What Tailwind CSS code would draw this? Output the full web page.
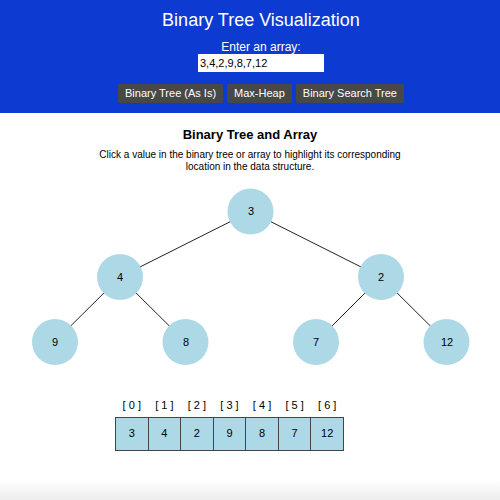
<!DOCTYPE html>
<html lang="en">
<head>
<meta charset="utf-8">
<meta name="viewport" content="width=device-width, initial-scale=1">
<title>Binary Tree Visualization</title>
<script src="https://cdn.jsdelivr.net/npm/@tailwindcss/browser@4"></script>
</head>
<body class="flex min-h-screen flex-col bg-white font-['Liberation_Sans',Arial,sans-serif] text-black">
<header class="flex flex-col items-center bg-[#0d3bd1] pt-2 pr-0 pb-[10px] pl-[22px] text-white">
  <h1 class="text-lg leading-6">Binary Tree Visualization</h1>
  <label for="values" class="mt-2 text-xs leading-[14px]">Enter an array:</label>
  <input id="values" type="text" value="3,4,2,9,8,7,12" class="h-[18px] w-[126px] bg-white px-[2px] text-[11px] text-black">
  <div class="mt-3 flex gap-1 text-[11px]">
    <button type="button" class="h-[19px] rounded-xs bg-[#484848] px-[7px]">Binary Tree (As Is)</button>
    <button type="button" class="h-[19px] rounded-xs bg-[#484848] px-[7px]">Max-Heap</button>
    <button type="button" class="h-[19px] rounded-xs bg-[#484848] px-[7px]">Binary Search Tree</button>
  </div>
</header>
<main class="flex grow flex-col pt-[14px]">
  <h2 class="text-center text-[13px] leading-4 font-bold">Binary Tree and Array</h2>
  <p class="mx-auto mt-[6px] max-w-[320px] text-center text-[10px] leading-3">Click a value in the binary tree or array to highlight its corresponding location in the data structure.</p>
  <svg viewBox="0 0 500 196" class="mt-[6px] w-full" role="img" aria-label="Binary tree" font-size="11" text-anchor="middle">
    <g stroke="#222" stroke-width="1">
      <path d="M250.500 32.500 120 98M250.500 32.500 381 98M120 98 54.500 163M120 98 185.500 163M381 98 316 163M381 98 446.500 163"/>
    </g>
    <g fill="#add8e6">
      <circle cx="250.500" cy="32.500" r="23"/>
      <circle cx="120" cy="98" r="23"/>
      <circle cx="381" cy="98" r="23"/>
      <circle cx="55" cy="163" r="23"/>
      <circle cx="185.500" cy="163" r="23"/>
      <circle cx="316" cy="163" r="23"/>
      <circle cx="446.500" cy="163" r="23"/>
    </g>
    <text x="251" y="36">3</text>
    <text x="120" y="102">4</text>
    <text x="381" y="102">2</text>
    <text x="55" y="167">9</text>
    <text x="186" y="167">8</text>
    <text x="316" y="167">7</text>
    <text x="447" y="167">12</text>
  </svg>
  <table class="mt-6 ml-[23%] w-[229px] table-fixed border-collapse text-center text-[11px]" aria-label="Array">
    <thead>
      <tr class="h-[18px] align-top leading-3">
        <th scope="col" class="font-normal">[ 0 ]</th>
        <th scope="col" class="font-normal">[ 1 ]</th>
        <th scope="col" class="font-normal">[ 2 ]</th>
        <th scope="col" class="font-normal">[ 3 ]</th>
        <th scope="col" class="font-normal">[ 4 ]</th>
        <th scope="col" class="font-normal">[ 5 ]</th>
        <th scope="col" class="font-normal">[ 6 ]</th>
      </tr>
    </thead>
    <tbody>
      <tr class="h-[33px] bg-[#add8e6]">
        <td class="border border-[#444]">3</td>
        <td class="border border-[#444]">4</td>
        <td class="border border-[#444]">2</td>
        <td class="border border-[#444]">9</td>
        <td class="border border-[#444]">8</td>
        <td class="border border-[#444]">7</td>
        <td class="border border-[#444]">12</td>
      </tr>
    </tbody>
  </table>
  <div class="mt-auto h-5 bg-linear-to-b from-white to-[#ececec]"></div>
</main>
</body>
</html>
